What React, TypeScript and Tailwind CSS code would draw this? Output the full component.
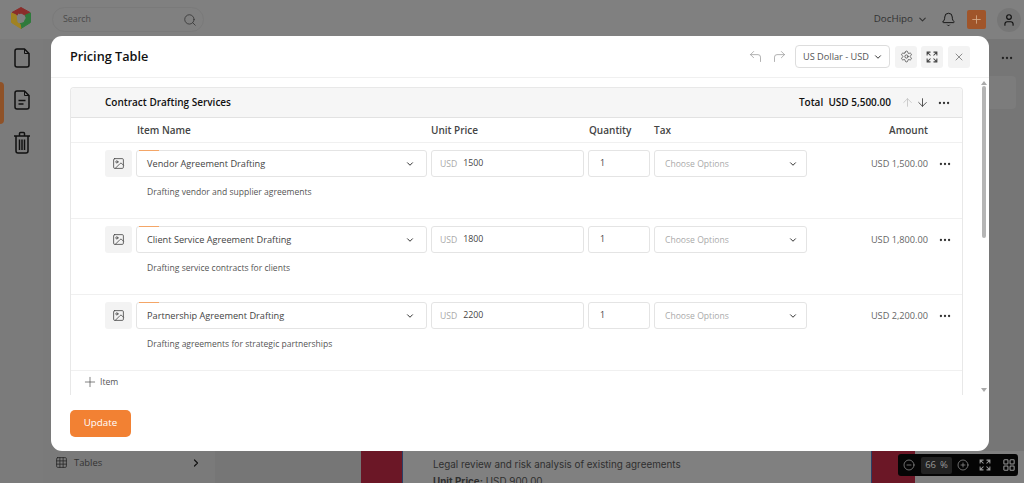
import React from "react";
import { ChevronDown, ChevronRight, CornerUpLeft, CornerUpRight, Settings, X, Ellipsis, ArrowUp, ArrowDown, Plus, Search, Bell, User, Image, Grid3x3, CirclePlus, CircleMinus } from "lucide-react";

const rows = [
  { name: "Vendor Agreement Drafting", desc: "Drafting vendor and supplier agreements", price: "1500", amount: "USD 1,500.00" },
  { name: "Client Service Agreement Drafting", desc: "Drafting service contracts for clients", price: "1800", amount: "USD 1,800.00" },
  { name: "Partnership Agreement Drafting", desc: "Drafting agreements for strategic partnerships", price: "2200", amount: "USD 2,200.00" },
];

const ExpandIcon = ({ className }: { className?: string }) => (
  <svg viewBox="0 0 16 16" className={className} fill="none" stroke="currentColor" strokeWidth="1.4">
    <path d="M1.5 6V1.5H6M1.5 1.5l4.5 4.5M10 1.5h4.5V6M14.5 1.5 10 6M1.5 10v4.5H6M1.5 14.5 6 10M14.5 10v4.5H10M14.5 14.5 10 10" />
  </svg>
);

const GridIcon = ({ className }: { className?: string }) => (
  <svg viewBox="0 0 14 14" className={className} fill="none" stroke="currentColor" strokeWidth="1.2">
    <rect x="1" y="1" width="4.8" height="4.8" rx="0.8" />
    <rect x="8.2" y="1" width="4.8" height="4.8" rx="0.8" />
    <rect x="1" y="8.2" width="4.8" height="4.8" rx="0.8" />
    <rect x="8.2" y="8.2" width="4.8" height="4.8" rx="0.8" />
  </svg>
);

const Row = ({ name, desc, price, amount }: (typeof rows)[number]) => (
  <div className="h-[76px] shrink-0 border-b border-[#f0f0f0] flex pt-[7px] pl-[34px] text-[9.2px] text-[#444]">
    <div className="w-[27px] h-[27px] mr-1 bg-[#f3f3f3] rounded-[3px] flex items-center justify-center">
      <Image className="w-[13px] h-[13px] text-[#444]" strokeWidth={1.5} />
    </div>
    <div className="w-[291px] mr-1">
      <div className="relative h-[27px] border border-[#e4e4e4] rounded-[3px] flex items-center justify-between pl-[10px] pr-[11px]">
        <div className="absolute -top-px left-[2px] w-5 h-px bg-[#f4a667]" />
        <span>{name}</span>
        <ChevronDown className="w-[10px] h-[10px] text-[#333]" strokeWidth={2.4} />
      </div>
      <div className="mt-[8px] pl-[11px] text-[8.55px] leading-[14px] text-[#555]">{desc}</div>
    </div>
    <div className="w-[153px] h-[27px] mr-1 pt-px border border-[#e4e4e4] rounded-[3px] flex items-center pl-[8px]">
      <span className="text-[#aaa] mr-[6px] text-[8.6px]">USD</span>
      <span className="text-[8.8px]">{price}</span>
    </div>
    <div className="w-[62px] h-[27px] mr-1 pt-px border border-[#e4e4e4] rounded-[3px] flex items-center pl-[11px] text-[8.8px]">1</div>
    <div className="w-[153px] h-[27px] pt-px border border-[#e4e4e4] rounded-[3px] flex items-center justify-between pl-[10px] pr-[8px] text-[8.6px] text-[#aaa]">
      <span>Choose Options</span>
      <ChevronDown className="w-[10px] h-[10px] text-[#333]" strokeWidth={2.4} />
    </div>
    <div className="w-[121px] h-[27px] flex items-center justify-end text-[#666]">{amount}</div>
    <div className="w-[33px] h-[27px] flex items-center justify-center">
      <Ellipsis className="w-[14px] h-[14px] text-[#333]" strokeWidth={2} />
    </div>
  </div>
);

export default function App() {
  return (
    <div className="relative h-[483px] w-[1024px] overflow-hidden bg-[#777777] font-['Open_Sans',sans-serif]">
      {/* page behind the dialog */}
      <header className="h-[39px] bg-[#808080] flex items-center pl-[10px] pr-[3px]">
        <svg viewBox="0 0 22 24" className="w-[22px] h-[24px] -mt-[3px]">
          <path d="M11 1.5 20 6.5 17 12 15 9 11 7 7 9 2 6.5Z" fill="#8a2d2a" stroke="#8a2d2a" strokeLinejoin="round" />
          <path d="M20.5 7V16.5L11 22.5 9.5 18 14 16.5 16 12 15.5 9Z" fill="#2f7a3c" stroke="#2f7a3c" strokeLinejoin="round" />
          <path d="M1.5 7V16.5L11 22.5 10 18 7 16.5 6 9Z" fill="#a08222" stroke="#a08222" strokeLinejoin="round" />
          <path d="m8 7.5 8 4.5-8 5Z" fill="#808080" />
        </svg>
        <div className="ml-[20px] w-[152px] h-[25px] rounded-full border border-[#7a7a7a] flex items-center justify-between pl-[10px] pr-[6px] text-[8.8px] text-[#4a4a4a]">
          <span>Search</span>
          <Search className="w-[14px] h-[14px] text-[#333]" strokeWidth={1.4} />
        </div>
        <div className="ml-auto flex items-center text-[#333]">
          <span className="text-[9.8px]">DocHipo</span>
          <ChevronDown className="w-[11px] h-[11px] ml-[4px]" strokeWidth={2.4} />
          <Bell className="w-[15px] h-[15px] ml-[13px] text-[#111]" strokeWidth={1.5} />
          <div className="w-[19px] h-[19px] ml-[11px] rounded-[2px] bg-[#a0552a] flex items-center justify-center">
            <Plus className="w-[13px] h-[13px] text-[#d9b08f]" strokeWidth={1.5} />
          </div>
          <div className="w-6 h-6 ml-[11px] rounded-full bg-[#767676] flex items-center justify-center">
            <User className="w-[14px] h-[14px] text-[#111]" strokeWidth={2} />
          </div>
        </div>
      </header>
      <div className="flex h-[444px]">
        <aside className="w-[43px] bg-[#7b7b7b] flex flex-col items-center pt-[9px] gap-[22px] text-[#111] relative">
          <div className="absolute left-0 top-[43px] w-1 h-[42px] bg-[#8f5228] rounded-r-sm" />
          <svg viewBox="0 0 16 20" className="w-[16px] h-[20px]" fill="none" stroke="currentColor" strokeWidth="1.5" strokeLinejoin="round">
            <path d="M3 1h7.5L15 5.5V17a2 2 0 0 1-2 2H3a2 2 0 0 1-2-2V3a2 2 0 0 1 2-2Z" />
            <path d="M10.5 1v4.5H15" strokeWidth="1" />
          </svg>
          <svg viewBox="0 0 16 20" className="w-[16px] h-[20px]" fill="none" stroke="currentColor" strokeWidth="1.5" strokeLinejoin="round">
            <path d="M3 1h7.5L15 5.5V17a2 2 0 0 1-2 2H3a2 2 0 0 1-2-2V3a2 2 0 0 1 2-2Z" />
            <path d="M10.5 1v4.5H15" strokeWidth="1" />
            <path d="M4.5 10.5h7M4.5 14h5" />
          </svg>
          <svg viewBox="0 0 18 23" className="w-[18px] h-[23px] -mt-[1px]" fill="none" stroke="currentColor" strokeWidth="1.5" strokeLinejoin="round">
            <path d="M1 5h16M6.5 5V2.5a1 1 0 0 1 1-1h3a1 1 0 0 1 1 1V5" />
            <path d="M3 5v15a2 2 0 0 0 2 2h8a2 2 0 0 0 2-2V5" />
            <path d="M6.5 8.5V19M9 8.5V19M11.5 8.5V19" />
          </svg>
        </aside>
        <div className="w-[172px] bg-[#7a7a7a] flex flex-col justify-end pb-[13px] pl-[12px] pr-[13px]">
          <div className="flex items-center text-[9.4px] text-[#333]">
            <Grid3x3 className="w-[13px] h-[13px] mr-[6px] text-[#222]" strokeWidth={1.4} />
            <span>Tables</span>
            <ChevronRight className="w-3 h-3 ml-auto text-[#111]" strokeWidth={2.4} />
          </div>
        </div>
        <main className="flex-1 flex flex-col bg-[#767676]">
          <div className="flex justify-end pt-[12px] pr-[10px]">
            <Ellipsis className="w-[14px] h-[14px] text-[#222]" strokeWidth={2} />
          </div>
          <div className="self-end mt-[11px] mr-[8px] w-[30px] h-[33px] rounded-[4px] bg-[#7c7c7c]" />
          <div className="mt-auto h-[32px] bg-[#808080] ml-[146px] flex overflow-hidden">
            <div className="w-[42px] bg-[#6b1726] border-r border-[#2b3f66]" />
            <div className="pl-[30px] pt-[5px] w-[468px] font-['Inter',sans-serif] text-[9.85px] leading-[16px] text-[#2f2f2f]">
              <div>Legal review and risk analysis of existing agreements</div>
              <div className="mt-[1px]"><b>Unit Price:</b> USD 900.00</div>
            </div>
            <div className="w-[44px] bg-[#6b1726] border-l border-[#2b3f66]" />
          </div>
        </main>
      </div>

      {/* zoom control */}
      <div className="absolute left-[898px] top-[454px] w-[120px] h-[22px] bg-[#050505] rounded-[3px] flex items-center pl-[5px] text-[#999]">
        <CircleMinus className="w-[12px] h-[12px]" strokeWidth={1.4} />
        <div className="ml-[6px] w-[31px] h-[17px] rounded-[2px] bg-[#222] flex items-center justify-center text-[9.5px] gap-1">
          <span>66</span><span>%</span>
        </div>
        <CirclePlus className="ml-[5px] w-[12px] h-[12px]" strokeWidth={1.4} />
        <ExpandIcon className="ml-[10px] w-3 h-3" />
        <GridIcon className="ml-[12px] w-3 h-3" />
      </div>

      {/* dialog */}
      <div className="absolute left-[51px] top-[36px] w-[938px] h-[415px] bg-white rounded-[11px] flex flex-col">
        <div className="h-[42px] shrink-0 border-b border-[#f0f0f0] flex items-center pl-[19px] pr-[19px]">
          <h2 className="mt-px text-[12.7px] font-semibold text-[#111]">Pricing Table</h2>
          <div className="ml-auto flex items-center text-[#999]">
            <CornerUpLeft className="w-[15px] h-[15px]" strokeWidth={1.2} />
            <CornerUpRight className="w-[15px] h-[15px] ml-[9px]" strokeWidth={1.2} />
            <div className="ml-[8px] w-[95px] h-[23px] border border-[#ddd] rounded-[4px] flex items-center justify-between pl-[7px] pr-[6px] text-[9.2px] text-[#555]">
              <span className="whitespace-nowrap">US Dollar - USD</span>
              <ChevronDown className="w-[10px] h-[10px] text-[#333]" strokeWidth={2.4} />
            </div>
            <div className="ml-[5px] w-[22px] h-[22px] bg-[#f3f3f3] rounded-[3px] flex items-center justify-center">
              <Settings className="w-[13px] h-[13px] text-[#444]" strokeWidth={1.4} />
            </div>
            <div className="ml-[4px] w-[22px] h-[22px] bg-[#f3f3f3] rounded-[3px] flex items-center justify-center">
              <ExpandIcon className="w-3 h-3 text-[#444]" />
            </div>
            <div className="ml-[5px] w-[22px] h-[22px] bg-[#f3f3f3] rounded-[3px] flex items-center justify-center">
              <X className="w-[12px] h-[12px] text-[#555]" strokeWidth={1.3} />
            </div>
          </div>
        </div>
        <div className="relative flex-1 min-h-0 pl-[19px] pr-[26px] pt-[9px] overflow-hidden">
          <div className="border-x border-t border-[#e8e8e8] rounded-t-[4px] h-full flex flex-col">
            <div className="h-[30px] shrink-0 bg-[#f6f6f6] border-b border-[#e2e2e2] rounded-t-[4px] flex items-center pl-[34px] pr-[11px] text-[10px] font-semibold text-[#111]">
              <span>Contract Drafting Services</span>
              <span className="ml-auto">Total&nbsp; USD 5,500.00</span>
              <ArrowUp className="ml-[10px] w-[13px] h-[13px] text-[#bbb]" strokeWidth={1.3} />
              <ArrowDown className="ml-[2px] w-[13px] h-[13px] text-[#333]" strokeWidth={1.5} />
              <Ellipsis className="ml-[8px] w-[14px] h-[14px] text-[#333]" strokeWidth={2} />
            </div>
            <div className="h-[25px] shrink-0 border-b border-[#f0f0f0] flex items-center text-[10px] font-semibold text-[#444]">
              <span className="ml-[66px] w-[294px]">Item Name</span>
              <span className="w-[158px]">Unit Price</span>
              <span className="w-[65px]">Quantity</span>
              <span>Tax</span>
              <span className="ml-auto mr-[34px]">Amount</span>
            </div>
            {rows.map((r) => (
              <Row key={r.name} {...r} />
            ))}
            <div className="flex items-center pl-[11px] pt-[3px] text-[8.6px] text-[#555]">
              <Plus className="w-[16px] h-[16px] text-[#444] mr-[2px]" strokeWidth={1} />
              <span>Item</span>
            </div>
          </div>
          {/* scrollbar */}
          <div className="absolute right-0 top-0 bottom-0 w-[11px] flex flex-col items-center pt-[3px]">
            <div className="w-0 h-0 border-x-[3px] border-x-transparent border-b-[4px] border-b-[#aaa]" />
            <div className="w-[4px] h-[152px] mt-[1px] rounded-full bg-[#b5b5b5]" />
            <div className="mt-auto mb-[3px] w-0 h-0 border-x-[3px] border-x-transparent border-t-[4px] border-t-[#aaa]" />
          </div>
        </div>
        <div className="h-[56px] shrink-0 pl-[19px] pt-[15px]">
          <button className="block w-[61px] h-[27px] rounded-[5px] bg-[#f28133] text-white text-[9.8px] font-medium">Update</button>
        </div>
      </div>
    </div>
  );
}
